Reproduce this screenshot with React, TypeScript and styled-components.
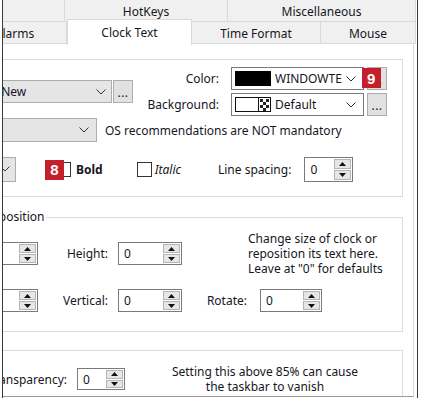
import React from 'react';
import styled, { createGlobalStyle } from 'styled-components';

const GlobalStyle = createGlobalStyle`
  html, body {
    margin: 0;
    padding: 0;
    background: #fff;
  }
  body {
    font-family: "Noto Sans", "Segoe UI", sans-serif;
    font-size: 12px;
    color: #16161e;
  }
`;

const Frame = styled.div`
  width: 421px;
  height: 398px;
  overflow: hidden;
  background: #fff;
  display: flex;
`;

const Window = styled.div`
  margin-left: 2px;
  width: 411px;
  height: 398px;
  padding-right: 3px;
  border-left: 1px solid #3a3a3a;
  border-right: 1px solid #3a3a3a;
  overflow: hidden;
`;

const TabRow = styled.div<{ $shift: number }>`
  display: flex;
  height: 22px;
  margin-left: ${p => p.$shift}px;
`;

const Tab = styled.div<{ $w: number; $active?: boolean }>`
  flex: 0 0 ${p => p.$w}px;
  box-sizing: border-box;
  height: ${p => (p.$active ? 26 : 22)}px;
  margin-top: ${p => (p.$active ? -3 : 0)}px;
  padding-top: ${p => (p.$active ? 0 : 2)}px;
  display: flex;
  align-items: center;
  justify-content: center;
  white-space: nowrap;
  background: ${p => (p.$active ? '#fff' : '#f0f0f0')};
  border-right: 1px solid #d9d9d9;
  border-bottom: ${p => (p.$active ? 'none' : '1px solid #d9d9d9')};
  border-top: ${p => (p.$active ? '1px solid #d9d9d9' : 'none')};
  border-left: ${p => (p.$active ? '1px solid #d9d9d9' : 'none')};
  position: ${p => (p.$active ? 'relative' : 'static')};
  z-index: ${p => (p.$active ? 2 : 0)};
`;

const Panel = styled.div`
  box-sizing: border-box;
  width: 411px;
  height: 353px;
  padding-top: 1px;
  background: #fff;
  border-right: 1px solid #d9d9d9;
  border-bottom: 1px solid #9a9a9a;
  overflow: hidden;
`;

const Group = styled.fieldset<{ $mt: number; $pt: number; $pb: number }>`
  margin: ${p => p.$mt}px 10px 0 -70px;
  padding: ${p => p.$pt}px 15px ${p => p.$pb}px 10px;
  border: 1px solid #dcdcdc;
  min-inline-size: 0;
`;

const Legend = styled.legend<{ $ml: number }>`
  margin-left: ${p => p.$ml}px;
  padding: 0 2px;
  line-height: 16px;
  white-space: nowrap;
`;

const Row = styled.div<{ $mt?: number; $h?: number }>`
  display: flex;
  align-items: center;
  margin-top: ${p => p.$mt ?? 0}px;
  height: ${p => (p.$h ? `${p.$h}px` : 'auto')};
`;

const Combo = styled.div<{ $w: number; $h?: number; $white?: boolean; $chevronGap?: number }>`
  box-sizing: border-box;
  flex: 0 0 ${p => p.$w}px;
  height: ${p => p.$h ?? 23}px;
  display: flex;
  align-items: center;
  padding: 0 ${p => p.$chevronGap ?? 6}px 0 3px;
  background: ${p => (p.$white ? '#fff' : '#e5e5e5')};
  border: 1px solid ${p => (p.$white ? '#7a7a7a' : '#adadad')};
`;

const ComboText = styled.span<{ $indent?: number }>`
  flex: 1;
  margin-left: ${p => p.$indent ?? 0}px;
  white-space: nowrap;
  overflow: hidden;
`;

const Dots = styled.div<{ $ml?: number }>`
  position: relative;
  box-sizing: border-box;
  flex: 0 0 20px;
  height: 23px;
  margin-left: ${p => p.$ml ?? 0}px;
  background: #e1e1e1;
  border: 1px solid #adadad;
  display: flex;
  align-items: center;
  justify-content: center;
  line-height: 1;
  padding-top: 2px;
  letter-spacing: 0.5px;
`;

const ColorGrid = styled.div`
  margin-left: auto;
  display: grid;
  grid-template-columns: auto 133px 20px;
  column-gap: 3px;
  row-gap: 3px;
  align-items: center;
`;

const FieldLabel = styled.span<{ $w?: number; $ml?: number; $mr?: number }>`
  flex: 0 0 ${p => (p.$w ? `${p.$w}px` : 'auto')};
  margin-left: ${p => p.$ml ?? 0}px;
  margin-right: ${p => p.$mr ?? 0}px;
  text-align: right;
  white-space: nowrap;
  justify-self: end;
`;

const Swatch = styled.svg`
  flex: 0 0 auto;
  margin-right: 4px;
`;

const Note = styled.span<{ $ml: number }>`
  margin-left: ${p => p.$ml}px;
  white-space: nowrap;
`;

const CheckWrap = styled.span<{ $ml: number }>`
  position: relative;
  box-sizing: border-box;
  flex: 0 0 15px;
  height: 15px;
  margin-left: ${p => p.$ml}px;
  background: #fff;
  border: 1px solid #333;
`;

const CheckText = styled.span<{ $ml: number; $bold?: boolean; $italic?: boolean }>`
  margin-left: ${p => p.$ml}px;
  font-weight: ${p => (p.$bold ? 700 : 400)};
  font-style: ${p => (p.$italic ? 'italic' : 'normal')};
`;

const Badge = styled.span<{ $left: number; $top: number }>`
  position: absolute;
  left: ${p => p.$left}px;
  top: ${p => p.$top}px;
  width: 19px;
  height: 20px;
  background: #c3202b;
  color: #fff;
  font-family: "Liberation Sans", Arial, sans-serif;
  font-weight: 700;
  font-size: 15px;
  display: flex;
  align-items: center;
  justify-content: center;
  z-index: 3;
`;

const Spin = styled.div<{ $w: number; $h?: number; $ml?: number }>`
  box-sizing: border-box;
  flex: 0 0 ${p => p.$w}px;
  height: ${p => p.$h ?? 23}px;
  margin-left: ${p => p.$ml ?? 0}px;
  display: flex;
  background: #fff;
  border: 1px solid #7a7a7a;
`;

const SpinValue = styled.span`
  flex: 1;
  align-self: center;
  padding-left: 5px;
`;

const SpinButtons = styled.div`
  flex: 0 0 17px;
  display: flex;
  flex-direction: column;
  gap: 1px;
  padding: 1px;
`;

const SpinBtn = styled.div`
  flex: 1;
  background: #e6e6e6;
  border: 1px solid #b4b4b4;
  display: flex;
  align-items: center;
  justify-content: center;
`;

const Description = styled.div<{ $ml: number; $w: number; $center?: boolean }>`
  margin-left: ${p => p.$ml}px;
  width: ${p => p.$w}px;
  line-height: 15px;
  text-align: ${p => (p.$center ? 'center' : 'left')};
  white-space: nowrap;
`;

const Chevron = () => (
  <svg width="10" height="6" viewBox="0 0 10 6">
    <polyline points="0.5,0.5 5,5 9.5,0.5" fill="none" stroke="#333" strokeWidth="1" />
  </svg>
);

const Arrow = ({ up }: { up?: boolean }) => (
  <svg width="7" height="4" viewBox="0 0 7 4">
    <polygon points={up ? '0,4 7,4 3.5,0' : '0,0 7,0 3.5,4'} fill="#111" />
  </svg>
);

const SpinBox = ({ w, h, ml, value = '0' }: { w: number; h?: number; ml?: number; value?: string }) => (
  <Spin $w={w} $h={h} $ml={ml}>
    <SpinValue>{value}</SpinValue>
    <SpinButtons>
      <SpinBtn><Arrow up /></SpinBtn>
      <SpinBtn><Arrow /></SpinBtn>
    </SpinButtons>
  </Spin>
);

const SolidSwatch = () => (
  <Swatch width="36" height="15" viewBox="0 0 36 15">
    <rect x="0" y="0" width="36" height="15" fill="#000" />
  </Swatch>
);

const DefaultSwatch = () => (
  <Swatch width="36" height="15" viewBox="0 0 36 15">
    <rect x="0.5" y="0.5" width="35" height="14" fill="#fff" stroke="#111" />
    <rect x="23.5" y="0.5" width="12" height="14" fill="#fff" stroke="#111" />
    <rect x="25" y="2" width="3" height="3" fill="#222" />
    <rect x="31" y="2" width="3" height="3" fill="#222" />
    <rect x="28" y="5" width="3" height="3" fill="#222" />
    <rect x="25" y="8" width="3" height="3" fill="#222" />
    <rect x="31" y="8" width="3" height="3" fill="#222" />
    <rect x="28" y="11" width="3" height="3" fill="#222" />
  </Swatch>
);

export default function App() {
  return (
    <>
      <GlobalStyle />
      <Frame>
        <Window>
          <TabRow $shift={-140}>
            <Tab $w={202}>Sounds</Tab>
            <Tab $w={163}>HotKeys</Tab>
            <Tab $w={188}>Miscellaneous</Tab>
          </TabRow>
          <TabRow $shift={-40}>
            <Tab $w={104}>Alarms</Tab>
            <Tab $w={125} $active>Clock Text</Tab>
            <Tab $w={129}>Time Format</Tab>
            <Tab $w={95}>Mouse</Tab>
          </TabRow>
          <Panel>
            <Group $mt={6} $pt={0} $pb={13}>
              <Legend $ml={0}>Font</Legend>
              <Row $h={49}>
                <Combo $w={168} $chevronGap={5}>
                  <ComboText $indent={8}>Courier New</ComboText>
                  <Chevron />
                </Combo>
                <Dots $ml={1}>...</Dots>
                <ColorGrid>
                  <FieldLabel $mr={9}>Color:</FieldLabel>
                  <Combo $w={133} $white $chevronGap={7}>
                    <SolidSwatch />
                    <ComboText>WINDOWTE</ComboText>
                    <Chevron />
                  </Combo>
                  <Dots>
                    ...
                    <Badge $left={-6} $top={0}>9</Badge>
                  </Dots>
                  <FieldLabel $mr={9}>Background:</FieldLabel>
                  <Combo $w={133} $white $chevronGap={7}>
                    <DefaultSwatch />
                    <ComboText>Default</ComboText>
                    <Chevron />
                  </Combo>
                  <Dots>...</Dots>
                </ColorGrid>
              </Row>
              <Row $mt={2}>
                <Combo $w={153} $h={24} $chevronGap={7}>
                  <ComboText>Default</ComboText>
                  <Chevron />
                </Combo>
                <Note $ml={8}>OS recommendations are NOT mandatory</Note>
              </Row>
              <Row $mt={13} $h={28}>
                <Combo $w={72} $h={25} $chevronGap={5}>
                  <ComboText />
                  <Chevron />
                </Combo>
                <CheckWrap $ml={40}>
                  <Badge $left={-12} $top={-3}>8</Badge>
                </CheckWrap>
                <CheckText $ml={5} $bold>Bold</CheckText>
                <CheckWrap $ml={34} />
                <CheckText $ml={3} $italic>Italic</CheckText>
                <FieldLabel $ml={37}>Line spacing:</FieldLabel>
                <SpinBox w={49} h={25} ml={13} />
              </Row>
            </Group>

            <Group $mt={12} $pt={6} $pb={19}>
              <Legend $ml={3}>Size and position</Legend>
              <Row>
                <SpinBox w={94} />
                <FieldLabel $w={70}>Height:</FieldLabel>
                <SpinBox w={64} ml={10} />
                <Description $ml={66} $w={140}>
                  Change size of clock or
                  <br />
                  reposition its text here.
                  <br />
                  Leave at "0" for defaults
                </Description>
              </Row>
              <Row $mt={13}>
                <SpinBox w={94} />
                <FieldLabel $w={70}>Vertical:</FieldLabel>
                <SpinBox w={64} ml={10} />
                <FieldLabel $w={65}>Rotate:</FieldLabel>
                <SpinBox w={62} ml={13} />
              </Row>
            </Group>

            <Group $mt={10} $pt={6} $pb={10}>
              <Legend $ml={6}>Taskbar</Legend>
              <Row $h={30}>
                <FieldLabel $w={123}>Transparency:</FieldLabel>
                <SpinBox w={48} h={22} ml={10} />
                <Description $ml={41} $w={198} $center>
                  Setting this above 85% can cause
                  <br />
                  the taskbar to vanish
                </Description>
              </Row>
            </Group>
          </Panel>
        </Window>
      </Frame>
    </>
  );
}
